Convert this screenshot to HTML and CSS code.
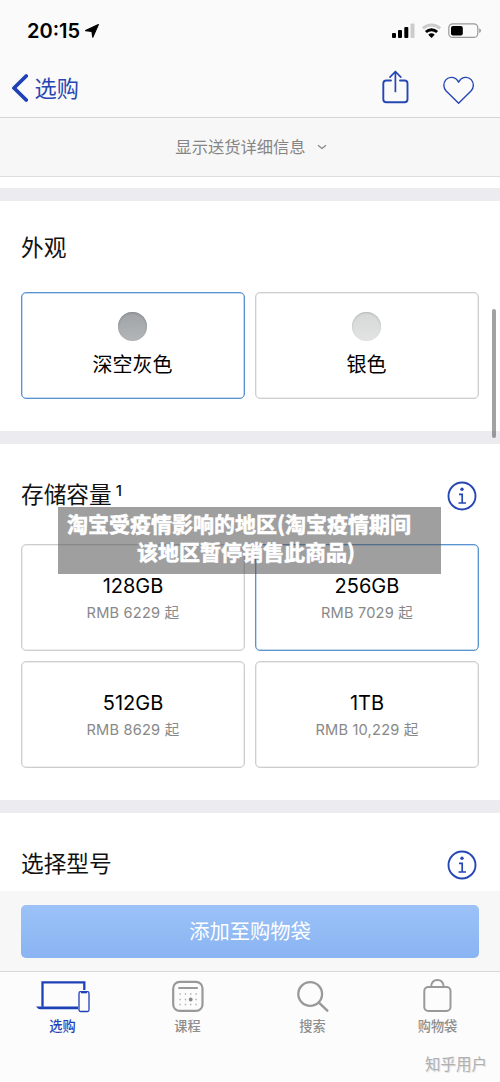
FILE: index.html
```html
<!DOCTYPE html>
<html lang="zh-CN">
<head>
<meta charset="utf-8">
<title>选购</title>
<link rel="stylesheet" href="styles.css">
</head>
<body>
<div class="screen">
  <header class="top">
    <div class="status">
      <div class="clock">20:15
        <svg class="locate" width="14" height="14" viewBox="0 0 14 14"><path d="M13.4.6 7.800 13.300 6.900 7.400.6 6.600Z" fill="#000" stroke="#000" stroke-width="1.100" stroke-linejoin="round"/></svg>
      </div>
      <svg width="92" height="18" viewBox="390 22 92 18">
        <rect x="392" y="33" width="4" height="5" rx="1"/>
        <rect x="398" y="30" width="4" height="8" rx="1"/>
        <rect x="404.3" y="27" width="4" height="11" rx="1"/>
        <rect x="410.5" y="23.5" width="4" height="14.5" rx="1" fill="#ccc"/>
        <g fill="none">
          <path d="M422.9 28.4a12.4 12.4 0 0 1 17.2 0" stroke="#ccc" stroke-width="3"/>
          <path d="M425.9 32a8.2 8.2 0 0 1 11.2 0" stroke="#000" stroke-width="2.9"/>
        </g>
        <path d="M428.3 34.7a4.5 4.5 0 0 1 6.4 0L431.5 38Z"/>
        <rect x="448.8" y="23.8" width="29" height="13.6" rx="4" fill="none" stroke="#999" stroke-width="1.2"/>
        <rect x="451" y="26" width="11.8" height="9.4" rx="2"/>
        <path d="M479.2 28.2q1.8.8 1.8 2.4t-1.8 2.4Z" fill="#999"/>
      </svg>
    </div>
    <nav class="nav">
      <div class="back">
        <svg width="18" height="30" viewBox="0 0 18 30"><path d="M16.200 3 4 15 16.200 27" fill="none" stroke="#1f41b8" stroke-width="3.8" stroke-linecap="round" stroke-linejoin="round"/></svg>
        <span>选购</span>
      </div>
      <svg width="94" height="36" viewBox="381 69 94 36">
        <g fill="none" stroke="#2547b4" stroke-linecap="round" stroke-linejoin="round">
          <path d="M391 80.5h-4.7q-3 0-3 3v15.7q0 3 3 3h18.2q3 0 3-3V83.500q0-3-3-3H400" stroke-width="1.9"/>
          <path d="M395.400 91.500V71.700M390 77.200l5.400-5.700 5.400 5.700" stroke-width="1.7"/>
          <path d="M458.600 103.200 446.200 91.100c-3-3-3.100-8.100-.4-11.200 3.300-3.800 9.600-3.600 12.800 2.300 3.200-5.900 9.500-6.100 12.800-2.300 2.700 3.100 2.600 8.200-.4 11.200Z" stroke-width="1.4"/>
        </g>
      </svg>
    </nav>
  </header>
  <div class="delivery">
    <span>显示送货详细信息</span>
    <svg width="10" height="6" viewBox="0 0 10 6"><path d="M1 1.200l4 3.300 4-3.300" fill="none" stroke="#858585" stroke-width="1.200"/></svg>
  </div>
  <main>
    <section class="finish">
      <h2>外观</h2>
      <div class="options">
        <div class="card swatch-card selected"><i class="swatch gray"></i><b>深空灰色</b></div>
        <div class="card swatch-card"><i class="swatch silver"></i><b>银色</b></div>
      </div>
    </section>
    <section class="storage">
      <div class="title"><h2>存储容量<sup>1</sup></h2>
        <svg class="info" width="30" height="30" viewBox="0 0 30 30"><circle cx="15" cy="15" r="13.500" fill="none" stroke="#2547b4" stroke-width="1.900"/><circle cx="15" cy="8.300" r="1.700" fill="#2547b4"/><path d="M12 13.300h3.200v8.500M11.500 22h7.500" fill="none" stroke="#2547b4" stroke-width="1.700"/></svg>
      </div>
      <div class="options">
        <div class="card"><b>128GB</b><small>RMB 6229 起</small></div>
        <div class="card selected"><b>256GB</b><small>RMB 7029 起</small></div>
        <div class="card"><b>512GB</b><small>RMB 8629 起</small></div>
        <div class="card"><b>1TB</b><small>RMB 10,229 起</small></div>
      </div>
      <div class="caption"><span class="line-one">淘宝受疫情影响的地区(淘宝疫情期间</span><span class="line-two">该地区暂停销售此商品)</span></div>
    </section>
    <section class="model">
      <div class="title"><h2>选择型号</h2>
        <svg class="info" width="30" height="30" viewBox="0 0 30 30"><circle cx="15" cy="15" r="13.500" fill="none" stroke="#2547b4" stroke-width="1.900"/><circle cx="15" cy="8.300" r="1.700" fill="#2547b4"/><path d="M12 13.300h3.200v8.500M11.500 22h7.500" fill="none" stroke="#2547b4" stroke-width="1.700"/></svg>
      </div>
    </section>
    <div class="scrollbar"></div>
  </main>
  <div class="buy"><div class="button">添加至购物袋</div></div>
  <footer class="tabs">
    <div class="tab active">
      <svg width="56" height="36" viewBox="35 978 56 36"><path d="M84.300 990v-7.600H42.500v24.400" fill="none" stroke="#1f41b8" stroke-width="2.300"/><path d="M36 1006.500h42v2.700H41q-3.500 0-5-2.700Z" fill="#1f41b8"/><rect x="79" y="991.700" width="10" height="19.800" rx="1.500" fill="#fcfcfc" stroke="#1f41b8" stroke-width="1.300"/><path d="M81 991.500h6v1.800h-6Z" fill="#1f41b8"/></svg>
      <span>选购</span>
    </div>
    <div class="tab">
      <svg width="36" height="36" viewBox="170 978 36 36"><rect x="173.200" y="981.900" width="29.300" height="29" rx="6.500" fill="none" stroke="#999" stroke-width="2.200"/><path d="M178.300 988h19.500" stroke="#999" stroke-width="2"/><path d="M179.500 994h18M179.500 999.500h18M179.500 1004.500h18" stroke="#aaa" stroke-width="1.300" stroke-dasharray="1.300 4"/><circle cx="190.700" cy="999.500" r="1.900" fill="#888"/></svg>
      <span>课程</span>
    </div>
    <div class="tab">
      <svg width="36" height="36" viewBox="294.500 978 36 36"><circle cx="309.700" cy="994" r="11.900" fill="none" stroke="#999" stroke-width="2.300"/><path d="m318.400 1002.600 8.400 8" stroke="#999" stroke-width="2.500" stroke-linecap="round"/></svg>
      <span>搜索</span>
    </div>
    <div class="tab">
      <svg width="36" height="36" viewBox="420 978 36 36"><g fill="none" stroke="#999" stroke-width="2"><rect x="424.300" y="987" width="26.200" height="24" rx="4"/><path d="M431 987c.4-4.500 3-6.900 6.400-6.900s6 2.400 6.400 6.900"/></g></svg>
      <span>购物袋</span>
    </div>
    <div class="watermark">知乎用户</div>
  </footer>
</div>
</body>
</html>
```
FILE: styles.css
```css
* { box-sizing: border-box; }
body { margin: 0; font-family: Inter, "Noto Sans CJK SC", sans-serif; color: #111; }
.screen { width: 500px; height: 1082px; display: flex; flex-direction: column; background: #fff; overflow: hidden; }
svg { display: block; flex: none; }
h2, b, small, sup, i { font-weight: 400; font-style: normal; }

.top { height: 118px; background: #fafafa; border-bottom: 1px solid #d5d5d7; }
.status { height: 60px; display: flex; justify-content: space-between; align-items: center; padding: 2px 18px 0 27px; }
.clock { display: flex; align-items: center; gap: 5px; font-size: 20px; font-weight: 600; color: #000; }
.nav { display: flex; justify-content: space-between; padding: 9px 25px 0 10px; }
.back { display: flex; align-items: center; gap: 6.5px; height: 38px; font-size: 22.2px; line-height: 36px; color: #2547b4; }
.back span { padding-top: 1px; }
.delivery { height: 59px; display: flex; align-items: center; justify-content: center; gap: 11px; padding-left: 2px; background: #f7f7f7; border-bottom: 1px solid #dedede; font-size: 16.3px; color: #858585; }
.delivery span { padding-bottom: 2px; }
.delivery svg { margin-bottom: 1px; }

main { height: 714px; position: relative; padding-top: 11px; }
section { border-top: 13px solid #ebebf0; padding: 0 21px; }
h2 { margin: 0; font-size: 22.7px; line-height: 36px; color: #111; }
sup { font-size: 15px; line-height: 0; font-weight: 500; margin-left: 4px; vertical-align: 7px; }
.finish { height: 243px; padding-top: 29px; }
.storage { height: 369px; padding-top: 33px; position: relative; }
.model { height: 91px; padding-top: 33px; }
.title { display: flex; justify-content: space-between; height: 38px; }
.info { margin-top: 4px; margin-right: 2px; }
.options { display: grid; grid-template-columns: 1fr 1fr; gap: 10px; }
.finish .options { margin-top: 26px; }
.storage .options { margin-top: 29px; }
.card { height: 107px; border: 1.5px solid #cecece; border-radius: 5px; display: flex; flex-direction: column; align-items: center; padding-top: 27px; box-shadow: inset 0 0 0 .5px #ddd; }
.card.selected { border-color: #5a94d0; box-shadow: inset 0 0 0 .5px #8bb5e2; }
.card b { font-size: 20px; line-height: 28px; color: #000; }
.card small { font-size: 14.6px; line-height: 26px; letter-spacing: .2px; color: #888; }
.swatch-card { padding-top: 19px; padding-right: 1px; }
.swatch { width: 29px; height: 29px; border-radius: 50%; margin-bottom: 10px; }
.gray { background: linear-gradient(#9fa3a6, #b2b6b9); box-shadow: inset 0 1px 2px #85898c; }
.silver { background: linear-gradient(#d6d8d7, #e2e4e3); box-shadow: inset 0 1px 2px #b5b7b6; }
.caption { position: absolute; left: 58px; top: 63px; width: 383px; height: 67px; padding-top: 2px; background: rgba(80, 80, 80, .55); color: #fff; font: 700 21px/28px "Noto Sans CJK SC", sans-serif; -webkit-text-stroke: .6px #fff; white-space: nowrap; }
.caption span { display: block; }
.line-one { padding-left: 9px; }
.line-two { padding-left: 79px; }
.scrollbar { position: absolute; left: 492px; top: 132px; width: 4px; height: 129px; border-radius: 2px; background: rgba(70, 70, 70, .5); }

.buy { height: 80px; padding: 14px 21px; background: #f7f7f7; }
.button { height: 53px; border-radius: 5px; background: linear-gradient(#9cc2f7, #89b4f2); color: #fff; font-size: 20.3px; line-height: 54px; text-align: center; }
.tabs { height: 111px; position: relative; display: grid; grid-template-columns: repeat(4, 1fr); background: #fcfcfc; border-top: 1px solid #d8d8d8; padding-top: 6px; }
.tab { display: flex; flex-direction: column; align-items: center; font-size: 13.2px; line-height: 20px; font-weight: 500; color: #8e8e8e; }
.tab span { margin-top: 2px; }
.tab.active { color: #1f41b8; }
.watermark { position: absolute; right: 13px; bottom: 5px; font-size: 15.5px; line-height: 24px; color: #b0b0b0; text-shadow: 1px 1px 1px #ddd; }
```
